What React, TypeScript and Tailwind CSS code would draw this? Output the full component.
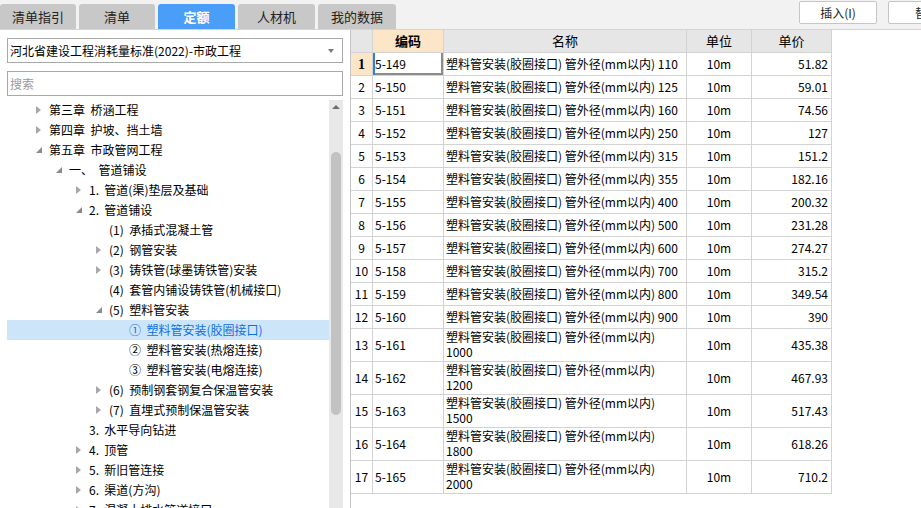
import React from 'react'

type TreeNode = { level: number; state: 'open' | 'closed' | 'leaf'; label: string; selected?: boolean }

const tree: TreeNode[] = [
  { level: 0, state: 'closed', label: '第三章  桥涵工程' },
  { level: 0, state: 'closed', label: '第四章  护坡、挡土墙' },
  { level: 0, state: 'open', label: '第五章  市政管网工程' },
  { level: 1, state: 'open', label: '一、  管道铺设' },
  { level: 2, state: 'closed', label: '1.  管道(渠)垫层及基础' },
  { level: 2, state: 'open', label: '2.  管道铺设' },
  { level: 3, state: 'leaf', label: '(1)  承插式混凝土管' },
  { level: 3, state: 'closed', label: '(2)  钢管安装' },
  { level: 3, state: 'closed', label: '(3)  铸铁管(球墨铸铁管)安装' },
  { level: 3, state: 'leaf', label: '(4)  套管内铺设铸铁管(机械接口)' },
  { level: 3, state: 'open', label: '(5)  塑料管安装' },
  { level: 4, state: 'leaf', label: '①  塑料管安装(胶圈接口)', selected: true },
  { level: 4, state: 'leaf', label: '②  塑料管安装(热熔连接)' },
  { level: 4, state: 'leaf', label: '③  塑料管安装(电熔连接)' },
  { level: 3, state: 'closed', label: '(6)  预制钢套钢复合保温管安装' },
  { level: 3, state: 'closed', label: '(7)  直埋式预制保温管安装' },
  { level: 2, state: 'leaf', label: '3.  水平导向钻进' },
  { level: 2, state: 'closed', label: '4.  顶管' },
  { level: 2, state: 'closed', label: '5.  新旧管连接' },
  { level: 2, state: 'closed', label: '6.  渠道(方沟)' },
  { level: 2, state: 'closed', label: '7.  混凝土排水管道接口' },
]

const indent = ['pl-[26px]', 'pl-[46px]', 'pl-[66px]', 'pl-[86px]', 'pl-[106px]']

const rows: [string, string, string][] = [
  ['5-149', '110', '51.82'],
  ['5-150', '125', '59.01'],
  ['5-151', '160', '74.56'],
  ['5-152', '250', '127'],
  ['5-153', '315', '151.2'],
  ['5-154', '355', '182.16'],
  ['5-155', '400', '200.32'],
  ['5-156', '500', '231.28'],
  ['5-157', '600', '274.27'],
  ['5-158', '700', '315.2'],
  ['5-159', '800', '349.54'],
  ['5-160', '900', '390'],
  ['5-161', '1000', '435.38'],
  ['5-162', '1200', '467.93'],
  ['5-163', '1500', '517.43'],
  ['5-164', '1800', '618.26'],
  ['5-165', '2000', '710.2'],
]

const tabs = [
  { label: '清单指引', w: 'w-[76px]' },
  { label: '清单', w: 'w-[76px]' },
  { label: '定额', w: 'w-[77px]', active: true },
  { label: '人材机', w: 'w-[77px]' },
  { label: '我的数据', w: 'w-[78px]' },
]

const NAME = '塑料管安装(胶圈接口) 管外径(mm以内)'
const cols = 'grid grid-cols-[22px_71px_243px_65px_80px]'
const cell = 'border-r border-b border-[#d3d3d3]'

const Caret = ({ state }: { state: TreeNode['state'] }) => {
  if (state === 'closed')
    return <span className="inline-block h-0 w-0 border-y-[4px] border-l-[5px] border-y-transparent border-l-[#a8a8a8]" />
  if (state === 'open')
    return (
      <svg width="6" height="6" viewBox="0 0 6 6">
        <path d="M6 0V6H0Z" fill="#8a8a8a" />
      </svg>
    )
  return null
}

export default function App() {
  return (
    <div className="flex h-[508px] w-[921px] flex-col overflow-hidden bg-white font-['Noto_Sans_CJK_SC',sans-serif] text-[12px] text-black">
      {/* top bar */}
      <div className="flex h-[30px] shrink-0 overflow-hidden border-b border-[#d4d4d4] bg-[#f2f2f2]">
        <div className="flex shrink-0 items-end gap-[3px]">
          {tabs.map((t) => (
            <div
              className={`flex h-[25px] items-center justify-center rounded-t-[3px] text-[13px] ${t.w} ${
                t.active ? 'bg-[#4a9ef8] font-bold text-white' : 'bg-[#c8c8c8] text-[#222]'
              }`}
              key={t.label}
            >
              {t.label}
            </div>
          ))}
        </div>
        <div className="ml-[403px] flex shrink-0 gap-[11px] pt-[1px]">
          <button className="h-[23px] w-[78px] rounded-[2px] border border-[#c6c6c6] bg-white text-[12px] text-[#222]">
            插入(I)
          </button>
          <button className="h-[23px] w-[78px] rounded-[2px] border border-[#c6c6c6] bg-white text-[12px] text-[#222]">
            替换
          </button>
        </div>
      </div>

      <div className="flex min-h-0 flex-1">
        {/* left panel */}
        <div className="flex w-[350px] shrink-0 flex-col pl-[7px] pr-[7px] pt-[8px]">
          <div className="flex h-[25px] items-center justify-between border border-[#a9a9a9] pl-[2px] pr-[8px] text-[12px]">
            <span>河北省建设工程消耗量标准(2022)-市政工程</span>
            <span className="h-0 w-0 border-x-[3px] border-t-[4px] border-x-transparent border-t-[#7a7a7a]" />
          </div>
          <div className="mt-[8px] flex h-[25px] items-center border border-[#a9a9a9] pl-[2px] text-[#9a9a9a]">搜索</div>
          <div className="mt-[4px] flex min-h-0 flex-1">
            <div className="min-w-0 flex-1 overflow-hidden">
              {tree.map((n, i) => (
                <div
                  className={`flex h-[20px] items-center ${indent[n.level]} ${
                    n.selected ? 'bg-[#cce5f8] text-[#1170e0]' : ''
                  }`}
                  key={i}
                >
                  <span className="flex w-[16px] items-center pl-[3px]">
                    <Caret state={n.state} />
                  </span>
                  <span className="whitespace-pre leading-[20px]">{n.label}</span>
                </div>
              ))}
            </div>
            <div className="flex w-[14px] flex-col items-center bg-[#e8e8e8]">
              <span className="mt-[5px] h-0 w-0 border-x-[4px] border-b-[4px] border-x-transparent border-b-[#6e6e6e]" />
              <div className="mt-[43px] h-[263px] w-[10px] rounded-[5px] bg-[#c2c2c2]" />
            </div>
          </div>
        </div>

        {/* table */}
        <div className="flex-1 border-l border-[#c4c4c4]">
          <div className={`${cols} h-[23px] w-[481px] text-[13px]`}>
            <div className={`${cell} bg-[#e6e6e6]`} />
            <div className={`${cell} flex items-center justify-center bg-[#fde5c7] font-bold`}>编码</div>
            <div className={`${cell} flex items-center justify-center bg-[#e6e6e6]`}>名称</div>
            <div className={`${cell} flex items-center justify-center bg-[#e6e6e6]`}>单位</div>
            <div className={`${cell} flex items-center justify-center bg-[#e6e6e6]`}>单价</div>
          </div>
          {rows.map(([code, size, price], i) => {
            const tall = i >= 12
            const first = i === 0
            return (
              <div className={`${cols} w-[481px] ${tall ? 'h-[33px]' : 'h-[23px]'}`} key={code}>
                <div
                  className={`${cell} flex items-center justify-center ${
                    first ? "bg-[#fde5c7] font-['Liberation_Serif',serif] text-[14px] font-bold" : ''
                  }`}
                >
                  {i + 1}
                </div>
                <div
                  className={`${cell} flex items-center pl-[2px] ${
                    first ? 'shadow-[inset_2px_0_0_#2b7de9,inset_-2px_-2px_0_#8c8c8c]' : ''
                  }`}
                >
                  {code}
                </div>
                {tall ? (
                  <div className={`${cell} overflow-hidden whitespace-nowrap pl-[2px] leading-[15px]`}>
                    <div>{NAME}</div>
                    <div>{size}</div>
                  </div>
                ) : (
                  <div className={`${cell} flex items-center overflow-hidden whitespace-nowrap pl-[2px]`}>
                    {NAME} {size}
                  </div>
                )}
                <div className={`${cell} flex items-center justify-center`}>10m</div>
                <div className={`${cell} flex items-center justify-end pr-[3px]`}>{price}</div>
              </div>
            )
          })}
        </div>
      </div>
    </div>
  )
}
